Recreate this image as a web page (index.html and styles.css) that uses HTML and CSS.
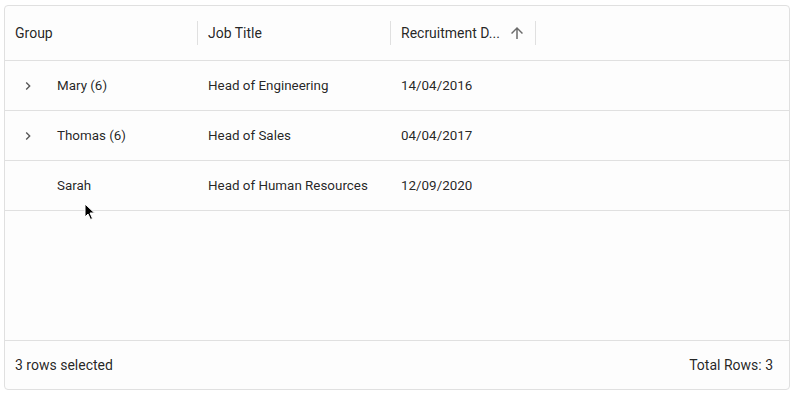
FILE: index.html
```html
<!DOCTYPE html>
<html>
<head>
<meta charset="utf-8">
<link rel="stylesheet" href="styles.css">
</head>
<body>
<div class="grid">
  <div class="header">
    <div class="hcell c1"><span class="htitle">Group</span><span class="sep"></span></div>
    <div class="hcell c2"><span class="htitle">Job Title</span><span class="sep"></span></div>
    <div class="hcell c3"><span class="htitle">Recruitment D...</span>
      <svg class="sort" viewBox="0 0 24 24" width="18" height="18"><path d="M4 12l1.41 1.41L11 7.83V20h2V7.83l5.58 5.59L20 12l-8-8-8 8z" fill="#6b6b6b"/></svg>
      <span class="sep"></span></div>
    <div class="hfill"></div>
  </div>
  <div class="body">
    <div class="row">
      <div class="cell c1"><span class="tog"><svg viewBox="0 0 24 24" width="16" height="16"><path d="M8.59 16.59 13.17 12 8.59 7.41 10 6l6 6-6 6-1.41-1.41z" fill="#555"/></svg></span><span class="name">Mary (6)</span></div>
      <div class="cell c2">Head of Engineering</div>
      <div class="cell c3">14/04/2016</div>
    </div>
    <div class="row">
      <div class="cell c1"><span class="tog"><svg viewBox="0 0 24 24" width="16" height="16"><path d="M8.59 16.59 13.17 12 8.59 7.41 10 6l6 6-6 6-1.41-1.41z" fill="#555"/></svg></span><span class="name">Thomas (6)</span></div>
      <div class="cell c2">Head of Sales</div>
      <div class="cell c3">04/04/2017</div>
    </div>
    <div class="row">
      <div class="cell c1"><span class="tog"></span><span class="name">Sarah</span></div>
      <div class="cell c2">Head of Human Resources</div>
      <div class="cell c3">12/09/2020</div>
    </div>
  </div>
  <div class="footer">
    <span>3 rows selected</span>
    <span>Total Rows: 3</span>
  </div>
</div>
<svg class="cursor" viewBox="0 0 12 18" width="12" height="18"><path d="M1 1 L1 14 L4 11 L6.5 16.5 L8.5 15.5 L6 10 L10.5 10 Z" fill="#000" stroke="#fff" stroke-width="1"/></svg>
</body>
</html>
```
FILE: styles.css
```css
html, body { margin: 0; padding: 0; background: #fff; }
body {
  font-family: Roboto, "Noto Sans", sans-serif;
  font-size: 14px;
  color: rgba(0,0,0,0.87);
  padding: 5px 3px 4px 4px;
  position: relative;
}
.grid {
  border: 1px solid #e0e0e0;
  border-radius: 4px;
  height: 383px;
  width: 784px;
  display: flex;
  flex-direction: column;
  background: #fdfdfd;
}
.header {
  display: flex;
  height: 54px;
  border-bottom: 1px solid #e0e0e0;
  align-items: center;
}
.hcell {
  display: flex;
  align-items: center;
  height: 100%;
  padding: 0 0 0 10px;
  box-sizing: border-box;
  position: relative;
  font-size: 14px;
  font-weight: 400;
}
.c1 { width: 193px; }
.c2 { width: 193px; }
.c3 { width: 145px; }
.htitle { white-space: nowrap; }
.sort { margin-left: 8px; }
.sep {
  position: absolute;
  right: 0;
  top: 15px;
  height: 24px;
  width: 1px;
  background: #e0e0e0;
}
.hfill { flex: 1; }
.body { flex: 1; }
.row {
  display: flex;
  height: 49px;
  border-bottom: 1px solid #e0e0e0;
  align-items: center;
}
.cell {
  padding-left: 10px;
  box-sizing: border-box;
  display: flex;
  align-items: center;
  white-space: nowrap;
  font-size: 13.4px;
}
.tog {
  width: 42px;
  display: flex;
  align-items: center;
  padding-left: 5px;
  box-sizing: border-box;
}
.footer {
  height: 48px;
  border-top: 1px solid #e0e0e0;
  display: flex;
  justify-content: space-between;
  align-items: center;
  padding: 0 16px 0 10px;
}
.cursor {
  position: absolute;
  left: 84px;
  top: 203px;
}
```
